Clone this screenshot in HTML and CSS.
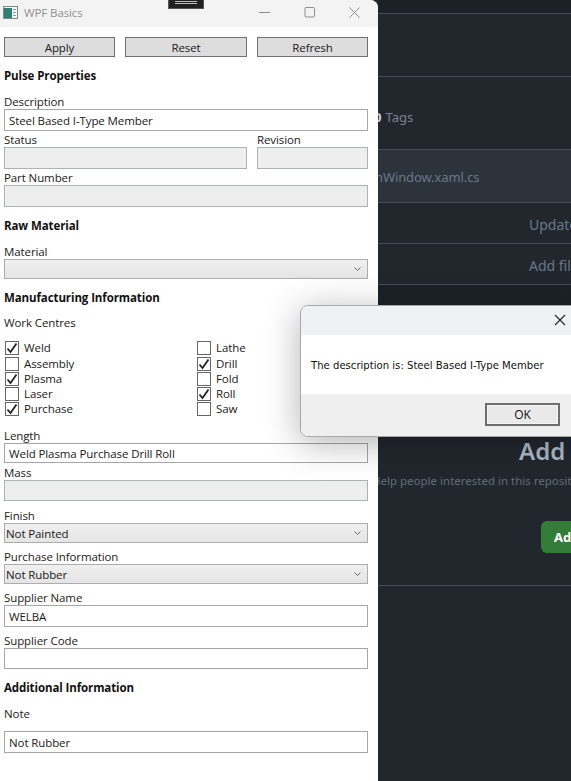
FILE: index.html
```html
<!doctype html>
<html>
  <head>
    <meta charset="utf-8"/>
    <title>WPF Basics</title>
    <link rel="stylesheet" href="styles.css">
  </head>
  <body>
    <div id="desktop">
      <div id="window">
        <div class="titlebar">
          <svg class="appicon" width="15" height="13" viewBox="0 0 15 13">
            <rect x="0.5" y="0.5" width="14" height="12" fill="#f4f6f4" stroke="#7d8a8a"/>
            <rect x="1" y="2" width="8" height="10" fill="#2f7f74"/>
            <rect x="10" y="3" width="3" height="1" fill="#8a9a9a"/>
            <rect x="10" y="6" width="3" height="1" fill="#8a9a9a"/>
            <rect x="10" y="9" width="3" height="1" fill="#8a9a9a"/>
          </svg>
          <span class="apptitle">WPF Basics</span>
          <div class="caption">
            <svg width="11" height="11" viewBox="0 0 11 11"><path d="M0 5.5H11" stroke="#8d8d8d"/></svg>
            <svg width="11" height="11" viewBox="0 0 11 11"><rect x="1" y="0.5" width="9.5" height="9.5" rx="1" fill="none" stroke="#8d8d8d"/></svg>
            <svg width="11" height="11" viewBox="0 0 11 11"><path d="M0.5 0.5L10.5 10.5M10.5 0.5L0.5 10.5" stroke="#8d8d8d"/></svg>
          </div>
        </div>

        <div class="form">
          <div class="actions">
            <button>Apply</button>
            <button>Reset</button>
            <button>Refresh</button>
          </div>

          <h2 class="h-sec">Pulse Properties</h2>
          <label class="lbl l-first">Description</label>
          <input class="txt tall" type="text" value="Steel Based I-Type Member">

          <div class="split">
            <div>
              <label class="lbl">Status</label>
              <input class="txt tall off" type="text">
            </div>
            <div>
              <label class="lbl">Revision</label>
              <input class="txt tall off" type="text">
            </div>
          </div>
          <label class="lbl">Part Number</label>
          <input class="txt tall off" type="text">

          <h2 class="h-sec">Raw Material</h2>
          <label class="lbl l-first">Material</label>
          <div class="combo"><span></span><svg width="7" height="5" viewBox="0 0 7 5"><path d="M0.5 0.5L3.5 3.5L6.5 0.5" fill="none" stroke="#666"/></svg></div>

          <h2 class="h-sec">Manufacturing Information</h2>
          <label class="lbl l-work">Work Centres</label>
          <div class="checks">
            <div class="check"><span class="box on"><svg width="12" height="12" viewBox="0 0 12 12"><path d="M1.5 6.5L4.5 10L10.5 1.5" fill="none" stroke="#222" stroke-width="1.8"/></svg></span>Weld</div>
            <div class="check"><span class="box"></span>Lathe</div>
            <div class="check"><span class="box"></span>Assembly</div>
            <div class="check"><span class="box on"><svg width="12" height="12" viewBox="0 0 12 12"><path d="M1.5 6.5L4.5 10L10.5 1.5" fill="none" stroke="#222" stroke-width="1.8"/></svg></span>Drill</div>
            <div class="check"><span class="box on"><svg width="12" height="12" viewBox="0 0 12 12"><path d="M1.5 6.5L4.5 10L10.5 1.5" fill="none" stroke="#222" stroke-width="1.8"/></svg></span>Plasma</div>
            <div class="check"><span class="box"></span>Fold</div>
            <div class="check"><span class="box"></span>Laser</div>
            <div class="check"><span class="box on"><svg width="12" height="12" viewBox="0 0 12 12"><path d="M1.5 6.5L4.5 10L10.5 1.5" fill="none" stroke="#222" stroke-width="1.8"/></svg></span>Roll</div>
            <div class="check"><span class="box on"><svg width="12" height="12" viewBox="0 0 12 12"><path d="M1.5 6.5L4.5 10L10.5 1.5" fill="none" stroke="#222" stroke-width="1.8"/></svg></span>Purchase</div>
            <div class="check"><span class="box"></span>Saw</div>
          </div>

          <label class="lbl l-len">Length</label>
          <input class="txt" type="text" value="Weld Plasma Purchase Drill Roll">
          <label class="lbl l-mass">Mass</label>
          <input class="txt mid off" type="text">
          <label class="lbl l-finish">Finish</label>
          <div class="combo"><span>Not Painted</span><svg width="7" height="5" viewBox="0 0 7 5"><path d="M0.5 0.5L3.5 3.5L6.5 0.5" fill="none" stroke="#666"/></svg></div>
          <label class="lbl l-gap">Purchase Information</label>
          <div class="combo"><span>Not Rubber</span><svg width="7" height="5" viewBox="0 0 7 5"><path d="M0.5 0.5L3.5 3.5L6.5 0.5" fill="none" stroke="#666"/></svg></div>
          <label class="lbl l-gap">Supplier Name</label>
          <input class="txt tall" type="text" value="WELBA">
          <label class="lbl l-gap">Supplier Code</label>
          <input class="txt mid" type="text">

          <h2 class="h-sec">Additional Information</h2>
          <label class="lbl l-note">Note</label>
          <input class="txt tall" type="text" value="Not Rubber">
        </div>
      </div>

      <div id="repo">
        <div class="r r-top"></div>
        <div class="r r-blank"></div>
        <div class="r r-tags"><b>0</b> Tags</div>
        <div class="r r-file">nWindow.xaml.cs</div>
        <div class="r r-commit">Update</div>
        <div class="r r-commit">Add fil</div>
        <div class="r r-readme">
          <div class="add-h">Add</div>
          <div class="add-p">Help people interested in this repository</div>
          <div class="add-b">Add</div>
        </div>
      </div>
    </div>

    <!-- things floating over the windows -->
    <div class="snapbar"><i></i><i></i></div>

    <div class="dialog">
      <div class="d-top">
        <svg width="12" height="12" viewBox="0 0 12 12"><path d="M1 1L11 11M11 1L1 11" stroke="#222" stroke-width="1.1"/></svg>
      </div>
      <div class="d-msg">The description is: Steel Based I-Type Member</div>
      <div class="d-foot"><button class="ok">OK</button></div>
    </div>
  </body>
</html>
```

FILE: styles.css
```css
* {
  padding: 0;
  margin: 0;
  box-sizing: border-box;
}

html, body {
  width: 571px;
  height: 781px;
  overflow: hidden;
}

body {
  position: relative;
  background: #22272e;
  font-family: "Open Sans", "Noto Sans", sans-serif;
  font-size: 11.5px;
  letter-spacing: -0.1px;
  color: #1a1a1a;
}

input, button {
  letter-spacing: inherit;
}

#desktop {
  display: flex;
  height: 781px;
}

/* the WPF window */
#window {
  width: 378px;
  flex: none;
  background: #fff;
  border-top-right-radius: 8px;
  position: relative;
  z-index: 1;
}

.titlebar {
  display: flex;
  align-items: center;
  height: 27px;
  padding: 0 0 3px 3px;
  background: #f3f3f3;
  border-top-right-radius: 8px;
}

.appicon {
  margin-right: 6px;
}

.apptitle {
  color: #8f8f8f;
}

.caption {
  display: flex;
  gap: 34px;
  margin-left: auto;
  margin-right: 18px;
}

.form {
  padding: 10px 10px 0 4px;
}

.actions {
  display: grid;
  grid-template-columns: 111px 122px 111px;
  gap: 10px;
}

.actions button {
  height: 20px;
  background: #dddddd;
  border: 1px solid #707070;
  font: inherit;
  color: #1a1a1a;
}

h2 {
  font-size: 11.5px;
  height: 14px;
  line-height: 14px;
  font-weight: 700;
  color: #111;
}

.h-sec { margin-top: 12px; }

.lbl {
  display: block;
  height: 14px;
  line-height: 14px;
  margin-top: 2px;
}

.l-first { margin-top: 12px; }
.l-work { margin-top: 11px; }
.l-len { margin-top: 13px; }
.l-mass { margin-top: 3px; }
.l-finish { margin-top: 8px; }
.l-gap { margin-top: 7px; }
.l-note { margin-top: 12px; margin-bottom: 10px; }

.txt {
  display: block;
  width: 364px;
  height: 20px;
  padding: 1px 4px 0;
  background: #fff;
  border: 1px solid #a6a6ab;
  border-radius: 0;
  font: inherit;
  color: #1a1a1a;
  outline: none;
}

.mid {
  height: 21px;
}

.tall {
  height: 22px;
}

.off {
  background: #eeeeee;
  border-color: #adb2b5;
}

.split {
  display: grid;
  grid-template-columns: 243px 111px;
  gap: 10px;
}

.split .txt {
  width: 100%;
}

.combo {
  display: flex;
  align-items: center;
  justify-content: space-between;
  width: 364px;
  height: 20px;
  padding: 0 6px 0 1px;
  background: linear-gradient(#f0f0f0, #e4e4e4);
  border: 1px solid #acacac;
}

.checks {
  display: grid;
  grid-template-columns: 192px 172px;
  grid-template-rows: 16px;
  grid-auto-rows: 15px;
  margin-top: 10px;
  padding-left: 1px;
}

.check {
  display: flex;
  align-items: center;
  gap: 5px;
  line-height: 14px;
}

.box {
  display: flex;
  align-items: center;
  justify-content: center;
  width: 14px;
  height: 14px;
  background: #fff;
  border: 1px solid #666;
}

/* the github page behind it */
#repo {
  flex: 1;
  min-width: 0;
  overflow: hidden;
  color: #66788a;
  font-family: "Noto Sans", sans-serif;
  font-size: 13px;
  letter-spacing: 0;
}

.r {
  border-bottom: 1px solid #444c56;
  white-space: nowrap;
  display: flex;
  align-items: center;
}

.r-top { height: 14px; background: #1c2128; }
.r-blank { height: 63px; }
.r-tags { height: 73px; margin-left: -4px; padding-top: 8px; color: #768390; }
.r-tags b { color: #cdd9e5; margin-right: 4px; }
.r-file { height: 53px; background: #2d333b; margin-left: -3px; padding-top: 2px; letter-spacing: -0.1px; }
.r-commit { height: 41px; padding: 2px 0 0 151px; font-size: 14px; }

.r-readme {
  display: block;
  height: 301px;
  padding-top: 151px;
  background: linear-gradient(#1c2128, #22272e 80px);
}

.add-h {
  padding-left: 141px;
  font-size: 24px;
  line-height: 30px;
  font-weight: 600;
  color: #adbac7;
}

.add-p {
  margin-left: -6px;
  font-size: 11.5px;
  line-height: 30px;
  color: #5f6d7a;
}

.add-b {
  width: 60px;
  height: 32px;
  margin: 25px 0 0 163px;
  padding-left: 13px;
  border-radius: 6px;
  background: #347d39;
  color: #fff;
  font-weight: 700;
  line-height: 32px;
}

.snapbar {
  position: absolute;
  left: 168px;
  top: 0;
  width: 36px;
  height: 9px;
  z-index: 2;
  background: #202020;
  border: 1px solid #555;
  border-top: 0;
  padding: 1px 6px;
}

.snapbar i {
  display: block;
  height: 1px;
  margin-bottom: 1px;
  background: #bdbdbd;
}

/* message box */
.dialog {
  position: absolute;
  left: 300px;
  top: 305px;
  width: 290px;
  height: 132px;
  z-index: 3;
  display: flex;
  flex-direction: column;
  border: 1px solid #a8a8a8;
  border-radius: 8px;
  overflow: hidden;
  background: #fff;
  box-shadow: 0 6px 36px rgba(0, 0, 0, 0.3);
  letter-spacing: 0;
}

.d-top {
  height: 29px;
  flex: none;
  background: #f0f1f5;
  padding: 8px 0 0 253px;
}

.d-msg {
  height: 59px;
  flex: none;
  line-height: 61px;
  padding-left: 10px;
  font-family: "DejaVu Sans", sans-serif;
  font-size: 10.1px;
  color: #111;
}

.d-foot {
  flex: 1;
  background: #efefef;
  padding: 9px 0 0 184px;
}

.ok {
  display: block;
  width: 75px;
  height: 23px;
  background: #e9e9e9;
  border: 2px solid #6e6e6e;
  box-shadow: inset 0 0 0 1px #f5f5f5;
  font: 12px "Open Sans", sans-serif;
  color: #111;
}
```
